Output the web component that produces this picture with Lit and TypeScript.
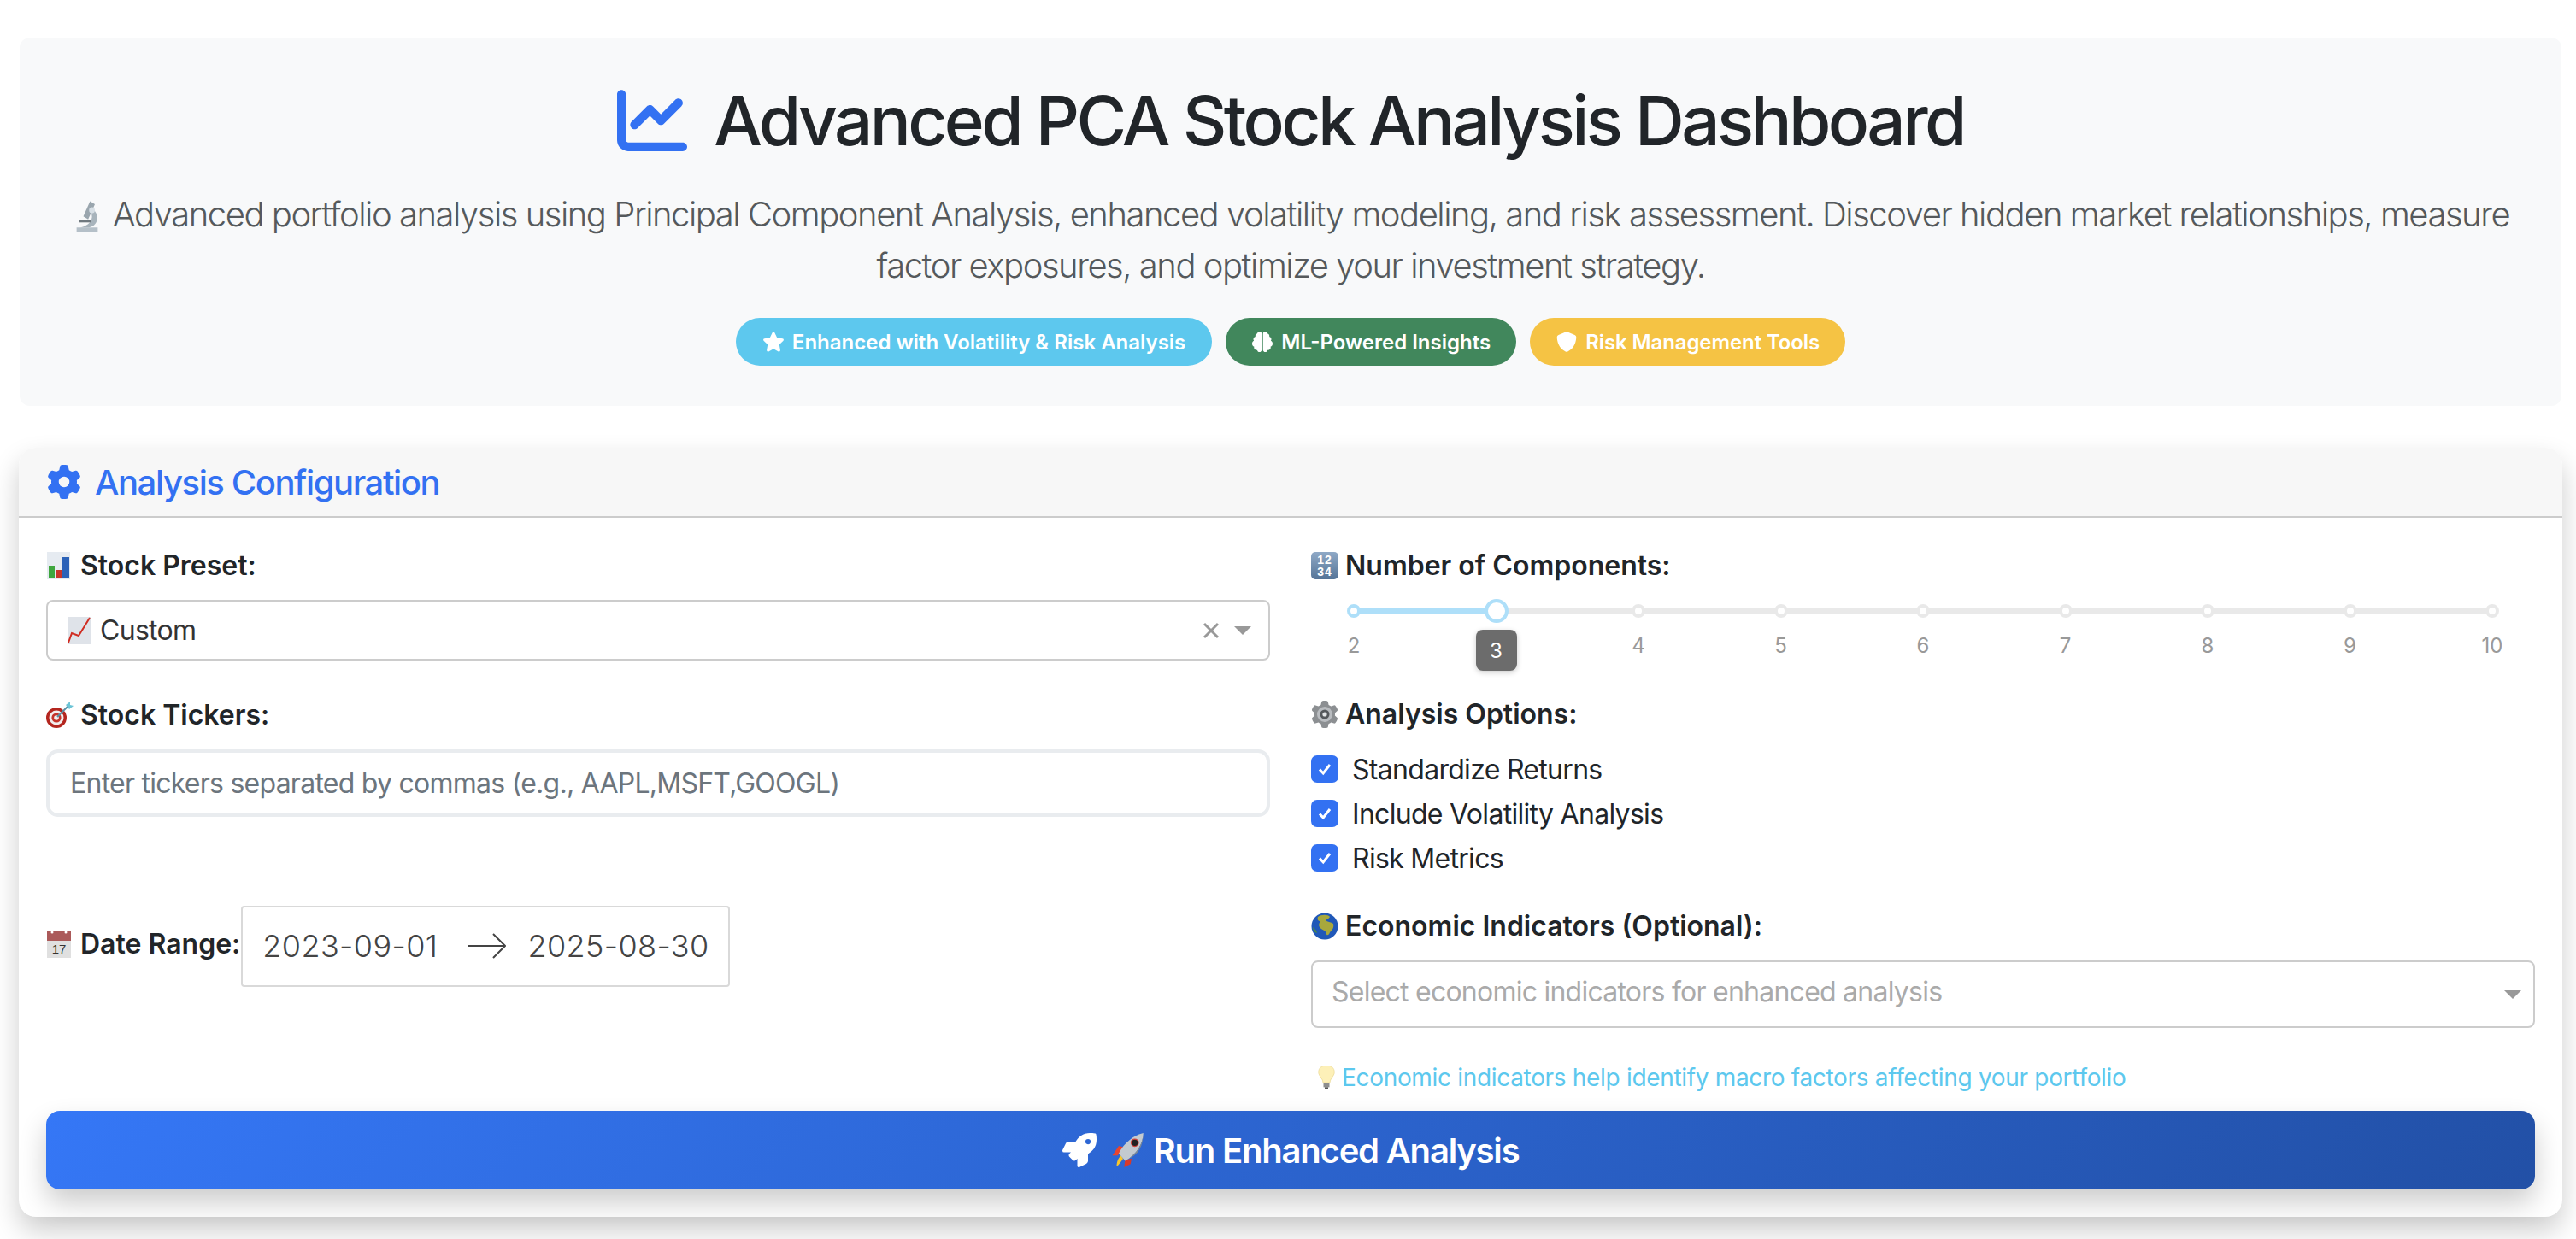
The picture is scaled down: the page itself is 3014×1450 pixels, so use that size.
import { LitElement, html, css, svg } from "lit";
import { customElement } from "lit/decorators.js";

const fa = (box: string, d: string, cls: string) =>
  html`<svg class=${cls} viewBox=${box} fill="currentColor"><path d=${d}></path></svg>`;

const P = {
  line: "M64 64c0-17.7-14.3-32-32-32S0 46.3 0 64V400c0 44.2 35.8 80 80 80H480c17.7 0 32-14.3 32-32s-14.3-32-32-32H80c-8.8 0-16-7.2-16-16V64zm406.6 86.6c12.5-12.5 12.5-32.8 0-45.3s-32.8-12.5-45.3 0L320 210.7l-57.4-57.4c-12.5-12.5-32.8-12.5-45.3 0l-112 112c-12.5 12.5-12.5 32.8 0 45.3s32.8 12.5 45.3 0L240 221.3l57.4 57.4c12.5 12.5 32.8 12.5 45.3 0l128-128z",
  gear: "M495.9 166.6c3.2 8.7 .5 18.4-6.4 24.6l-43.3 39.4c1.1 8.3 1.7 16.8 1.7 25.4s-.6 17.1-1.7 25.4l43.3 39.4c6.9 6.2 9.6 15.9 6.4 24.6c-4.4 11.9-9.7 23.3-15.8 34.3l-4.7 8.1c-6.6 11-14 21.4-22.1 31.2c-5.9 7.2-15.7 9.6-24.5 6.8l-55.7-17.7c-13.4 10.3-28.2 18.9-44 25.4l-12.5 57.1c-2 9.1-9 16.3-18.2 17.8c-13.8 2.3-28 3.5-42.5 3.5s-28.7-1.2-42.5-3.5c-9.2-1.5-16.2-8.7-18.2-17.8l-12.5-57.1c-15.8-6.5-30.6-15.1-44-25.4L83.1 425.9c-8.8 2.8-18.6 .3-24.5-6.8c-8.1-9.8-15.5-20.2-22.1-31.2l-4.7-8.1c-6.1-11-11.4-22.4-15.8-34.3c-3.2-8.7-.5-18.4 6.4-24.6l43.3-39.4C64.6 273.1 64 264.6 64 256s.6-17.1 1.7-25.4L22.4 191.2c-6.9-6.2-9.6-15.9-6.4-24.6c4.4-11.9 9.7-23.3 15.8-34.3l4.7-8.1c6.6-11 14-21.4 22.1-31.2c5.9-7.2 15.7-9.6 24.5-6.8l55.7 17.7c13.4-10.3 28.2-18.9 44-25.4l12.5-57.1c2-9.1 9-16.3 18.2-17.8C227.3 1.2 241.5 0 256 0s28.7 1.2 42.5 3.5c9.2 1.5 16.2 8.7 18.2 17.8l12.5 57.1c15.8 6.5 30.6 15.1 44 25.4l55.7-17.7c8.8-2.8 18.6-.3 24.5 6.8c8.1 9.8 15.5 20.2 22.1 31.2l4.7 8.1c6.1 11 11.4 22.4 15.8 34.3zM256 336a80 80 0 1 0 0-160 80 80 0 1 0 0 160z",
  star: "M316.9 18C311.6 7 300.4 0 288.1 0s-23.4 7-28.8 18L195 150.3 51.4 171.5c-12 1.8-22 10.2-25.7 21.7s-.7 24.2 7.9 32.7L137.8 329 113.2 474.7c-2 12 3 24.2 12.9 31.3s23 8 33.8 2.3l128.3-68.5 128.3 68.5c10.8 5.7 23.9 4.9 33.8-2.3s14.9-19.3 12.9-31.3L438.5 329 542.7 225.9c8.6-8.5 11.7-21.2 7.9-32.7s-13.7-19.9-25.7-21.7L381.2 150.3 316.9 18z",
  shield: "M256 0c4.6 0 9.2 1 13.4 2.9L457.7 82.8c22 9.3 38.4 31 38.3 57.2c-.5 99.2-41.3 280.7-213.6 363.2c-16.7 8-36.1 8-52.8 0C57.3 420.7 16.5 239.2 16 140c-.1-26.2 16.3-47.9 38.3-57.2L242.7 2.9C246.8 1 251.4 0 256 0z",
  brain: "M184 0c30.9 0 56 25.1 56 56V456c0 30.9-25.1 56-56 56c-28.9 0-52.7-21.9-55.7-50.1c-5.2 1.4-10.7 2.1-16.3 2.1c-35.3 0-64-28.7-64-64c0-7.4 1.3-14.6 3.6-21.2C21.4 367.4 0 338.2 0 304c0-31.9 18.7-59.5 45.8-72.3C37.1 220.8 32 207 32 192c0-30.7 21.6-56.3 50.4-62.6C80.8 123.9 80 118 80 112c0-29.9 20.6-55.1 48.3-62.1C131.3 21.9 155.1 0 184 0zM328 0c28.9 0 52.6 21.9 55.7 49.9c27.8 7 48.3 32.1 48.3 62.1c0 6-.8 11.9-2.4 17.4c28.8 6.2 50.4 31.9 50.4 62.6c0 15-5.1 28.8-13.8 39.7C493.3 244.5 512 272.1 512 304c0 34.2-21.4 63.4-51.6 74.8c2.3 6.6 3.6 13.8 3.6 21.2c0 35.3-28.7 64-64 64c-5.6 0-11.1-.7-16.3-2.1c-3 28.2-26.8 50.1-55.7 50.1c-30.9 0-56-25.1-56-56V56c0-30.9 25.1-56 56-56z",
  rocket: "M505.12019,19.09375c-1.18945-5.53125-6.65819-11-12.207-12.1875C460.716,0,435.507,0,410.40747,0,307.17523,0,245.26909,55.20312,199.05238,128H94.83772c-16.34763.01562-35.55658,11.875-42.88664,26.48438L2.51562,253.29688A28.4,28.4,0,0,0,0,264a24.00867,24.00867,0,0,0,24.00582,24H127.81618l-22.47457,22.46875c-11.36521,11.36133-12.99607,32.25781,0,45.25L156.24582,406.625c11.15623,11.1875,32.15619,13.15625,45.27726,0l22.47457-22.46875V488a24.00867,24.00867,0,0,0,24.00581,24,28.55934,28.55934,0,0,0,10.707-2.51562l98.72834-49.39063c14.62888-7.29687,26.50776-26.5,26.50776-42.85937V312.79688c72.59753-46.3125,128.03493-108.40626,128.03493-211.09376C512.07526,76.5,512.07526,51.29688,505.12019,19.09375ZM384.04033,168A40,40,0,1,1,424.05,128,40.02322,40.02322,0,0,1,384.04033,168Z",
};

const emoji = (body: unknown, cls = "emoji") =>
  html`<svg class=${cls} viewBox="0 0 32 32" preserveAspectRatio="none">${body}</svg>`;

const E = {
  bars: svg`<rect x="1" y="0" width="27" height="32" fill="#e6ebf1"/><rect x="3" y="16" width="7" height="15" fill="#3ea63e"/><rect x="11" y="21" width="7" height="10" fill="#c9352b"/><rect x="19" y="6" width="8" height="25" fill="#2b62b8"/>`,
  up: svg`<rect x="2" y="0" width="28" height="32" fill="#dfe3e9"/><path d="M3 30 L7 19 L15 22 L28 1" fill="none" stroke="#d02c22" stroke-width="2"/>`,
  target: svg`<circle cx="12" cy="19" r="12" fill="#b4261f"/><circle cx="12" cy="19" r="8.5" fill="#f3eeee"/><circle cx="12" cy="19" r="5.6" fill="#c5342b"/><circle cx="12" cy="19" r="2.8" fill="#f3eeee"/><path d="M13 18 L26 5" stroke="#5b8fa3" stroke-width="2"/><path d="M23 4 L28 0 L28 4 L32 5 L27 9 Z" fill="#6cc4d6"/>`,
  nums: svg`<defs><linearGradient id="ng" x1="0" y1="0" x2="0" y2="1"><stop offset="0" stop-color="#8fa9c6"/><stop offset="1" stop-color="#557497"/></linearGradient></defs><rect x="0" y="0" width="32" height="32" rx="5" fill="url(#ng)"/><text x="16" y="14" text-anchor="middle" class="e-t">12</text><text x="16" y="28" text-anchor="middle" class="e-t">34</text>`,
  cog: svg`<g transform="scale(.0625)"><path fill="#8c8f92" d=${P.gear}></path></g><circle cx="16" cy="16" r="9" fill="#b9bcc0"/><circle cx="16" cy="16" r="5.5" fill="#55585c"/><circle cx="16" cy="16" r="2.6" fill="#e2e4e6"/>`,
  cal: svg`<rect x="1" y="0" width="28" height="32" fill="#e0e0e0"/><rect x="1" y="0" width="28" height="12" fill="#ab5a5a"/><circle cx="7" cy="2" r="1.5" fill="#fff"/><circle cx="23" cy="2" r="1.5" fill="#fff"/><text x="15" y="27" text-anchor="middle" class="e-c">17</text>`,
  globe: svg`<circle cx="16" cy="16" r="15.5" fill="#2058b8"/><path d="M8 5 C12 2 20 2 22 5 C20 8 18 8 17 9 C19 11 23 11 26 13 C27 18 25 20 22 23 C21 27 18 27 18 25 C17 21 15 21 12 19 C9 17 8 14 11 10 C8 10 7 8 8 5 Z" fill="#a8a83c"/><path d="M2 17 C4 19 6 20 7 24 C4 23 2 20 2 17 Z" fill="#4f8f3c"/>`,
  bulb: svg`<path d="M16 0 C8 0 6 6 7 11 C8 15 12 18 12 23 L20 23 C20 18 24 15 25 11 C26 6 24 0 16 0 Z" fill="#fdf0b8" stroke="#e8d68c" stroke-width=".7"/><rect x="12.5" y="23" width="7" height="6" fill="#8d8d8d"/><rect x="14" y="29" width="4" height="3" fill="#555"/>`,
  rocket: svg`<path d="M2 21 L8 12 L12 13 L7 21 Z" fill="#e8442e"/><path d="M20 24 L19 29 L13 32 L14 25 Z" fill="#d8392a"/><path d="M6 31 C6 26 8 23 10 21 L12 24 C10 27 8 30 6 31 Z" fill="#f9c62b"/><path d="M8 19 C13 9 22 2 31 0 C31 9 25 20 14 26 Z" fill="#c3cad0"/><path d="M14 26 C25 20 31 9 31 0 C31 12 26 21 17 24 Z" fill="#7f8a93"/><circle cx="23" cy="9" r="3.4" fill="#222" stroke="#d0413a" stroke-width="1"/>`,
  micro: svg`<rect x="5" y="28" width="22" height="4" fill="#b5c0c8"/><path d="M19 2 L24 5 L17 20 L12 17 Z" fill="#9aa6ae"/><path d="M22 10 C29 15 28 26 18 28 L9 28 C15 27 24 22 20 13 Z" fill="#a8b4bc"/><circle cx="21" cy="11" r="3" fill="#d8e0e6"/><rect x="8" y="21" width="12" height="2" fill="#70797f"/>`,
};

const MARKS = [2, 3, 4, 5, 6, 7, 8, 9, 10];
const pos = (v: number) => `${((v - 2) / 8) * 100}%`;

@customElement("app-root")
export class AppRoot extends LitElement {
  static styles = css`
    :host { display: block; background: #fff; font-family: Inter, "Noto Sans", sans-serif; color: #212529; padding: 44px 16px 0 22px; height: 1450px; box-sizing: border-box; overflow: hidden; }
    * { box-sizing: border-box; }
    .hero { background: #f8f9fa; border-radius: 12px; height: 431px; margin: 0 1px 49px; padding-top: 49px; text-align: center; }
    h1 { margin: 0; display: flex; justify-content: center; align-items: center; gap: 31px; font-size: 80px; line-height: 96px; font-weight: 500; letter-spacing: -3.6px; }
    .h-ico { width: 82px; height: 82px; color: #3371f2; }
    .lead { margin: 32px 48px 0; font-size: 40px; line-height: 60px; font-weight: 300; color: #55595c; letter-spacing: -1.48px; }
    .m-ico { width: 36px; height: 38px; vertical-align: -6px; margin-right: 12px; }
    .badges { display: flex; justify-content: center; gap: 16px; margin-top: 31px; }
    .badge { height: 56px; border-radius: 28px; padding: 0 30px; display: flex; align-items: center; gap: 9px; color: #fff; font-size: 24px; font-weight: 600; }
    .b1 { background: #5dc8ee; padding: 0 31px; }
    .b2 { background: #41875c; }
    .b3 { background: #f5c344; letter-spacing: -.1px; }
    .b-ico { width: 26px; height: 24px; }
    .card { background: #fff; border-radius: 20px; box-shadow: 0 16px 32px rgba(0,0,0,.2); height: 900px; }
    .card-h { height: 82px; background: #f7f7f7; border-bottom: 2px solid #ccc; border-radius: 20px 20px 0 0; display: flex; align-items: center; padding-left: 33px; gap: 16px; color: #3371f2; font-size: 40px; font-weight: 500; letter-spacing: -1.4px; }
    .g-ico { width: 40px; height: 40px; }
    .card-b { padding: 32px; }
    .cols { display: grid; grid-template-columns: 1fr 1fr; gap: 48px; }
    .lbl { display: flex; align-items: center; font-size: 32px; line-height: 48px; font-weight: 600; margin-bottom: 16px; white-space: nowrap; }
    .emoji { width: 32px; height: 32px; margin-right: 8px; flex: none; }
    .e-t { font: 600 14px "Liberation Sans", sans-serif; fill: #fff; letter-spacing: 1px; }
    .e-c { font: 400 15px "Liberation Sans", sans-serif; fill: #333; }
    .sel { height: 71px; border: 2px solid #ccc; border-radius: 8px; display: flex; align-items: center; padding: 0 20px 0 21px; font-size: 32px; letter-spacing: -.7px; color: #333; margin-bottom: 40px; }
    .grow { flex: 1; }
    .x { width: 20px; height: 20px; margin-right: 17px; }
    .caret { width: 0; height: 0; border-left: 10px solid transparent; border-right: 10px solid transparent; border-top: 10px solid #999; }
    .input { height: 79px; border: 4px solid #e9ecef; border-radius: 14px; display: flex; align-items: center; padding: 0 24px; font-size: 32px; letter-spacing: -.75px; color: #6c757d; }
    .date-row { display: flex; align-items: center; margin-top: 104px; }
    .date-row .lbl { margin: 0 1px 6px 0; }
    .date { width: 572px; height: 95px; border: 2px solid #d9d9d9; border-radius: 4px; display: flex; align-items: center; padding: 0 23px 2px; font-size: 36px; font-weight: 300; letter-spacing: .4px; color: #444; white-space: nowrap; }
    .arr { width: 44px; height: 30px; margin: 0 25px 0 36px; flex: none; }
    .slider { position: relative; height: 70px; margin: 0 50px 40px 50px; }
    .rail { position: absolute; left: 0; right: 0; top: 9px; height: 8px; background: #e9e9e9; border-radius: 4px; }
    .track { position: absolute; left: 0; top: 9px; height: 8px; background: #aedff9; border-radius: 4px; }
    .dot { position: absolute; top: 5px; width: 16px; height: 16px; margin-left: -8px; background: #fff; border: 4px solid #e9e9e9; border-radius: 50%; }
    .dot.on { border-color: #aedff9; }
    .handle { position: absolute; top: -1px; width: 28px; height: 28px; margin-left: -14px; background: #fff; border: 4px solid #aedff9; border-radius: 50%; }
    .tick { position: absolute; top: 39px; width: 60px; margin-left: -30px; text-align: center; font-size: 24px; line-height: 30px; color: #999; }
    .tip { position: absolute; top: 35px; width: 48px; height: 48px; margin-left: -24px; background: #6c6c6c; border-radius: 8px; color: #fff; font-size: 24px; display: flex; align-items: center; justify-content: center; box-shadow: 0 2px 6px rgba(0,0,0,.2); }
    .chk { height: 52px; display: flex; align-items: center; font-size: 32px; letter-spacing: -.7px; }
    .box { width: 32px; height: 32px; border-radius: 7px; background: #3371f2; margin-right: 16px; display: flex; align-items: center; justify-content: center; }
    .box svg { width: 20px; height: 20px; }
    .checks { margin: -2px 0 30px; }
    .sel2 { height: 79px; border: 2px solid #ccc; border-radius: 8px; display: flex; align-items: center; justify-content: space-between; padding: 0 14px 0 22px; font-size: 32px; letter-spacing: -.76px; color: #aaa; margin-bottom: 37px; }
    .sel2 > span:first-child { padding-bottom: 6px; }
    .hint { display: flex; align-items: center; font-size: 28px; line-height: 42px; letter-spacing: -.32px; color: #5dc8ee; margin-bottom: 18px; padding-left: 2px; }
    .hint .emoji { height: 28px; margin-right: 2px; }
    .run { height: 92px; border-radius: 16px; background: linear-gradient(135deg, #3577f6, #2250a6); box-shadow: 0 16px 32px rgba(0,0,0,.2); color: #fff; font-size: 40px; font-weight: 600; letter-spacing: -1.2px; display: flex; align-items: center; justify-content: center; gap: 16px; }
    .r-ico { width: 40px; height: 40px; }
    .r-emo { width: 40px; height: 40px; margin-right: -5px; }
  `;

  render() {
    return html`
      <header class="hero">
        <h1>${fa("0 0 512 512", P.line, "h-ico")}<span>Advanced PCA Stock Analysis Dashboard</span></h1>
        <p class="lead"><svg class="m-ico" viewBox="0 0 32 32" preserveAspectRatio="none">${E.micro}</svg>Advanced portfolio analysis using Principal Component Analysis, enhanced volatility modeling, and risk assessment. Discover hidden market relationships, measure factor exposures, and optimize your investment strategy.</p>
        <div class="badges">
          <span class="badge b1">${fa("0 0 576 512", P.star, "b-ico")}Enhanced with Volatility &amp; Risk Analysis</span>
          <span class="badge b2">${fa("0 0 512 512", P.brain, "b-ico")}ML-Powered Insights</span>
          <span class="badge b3">${fa("0 0 512 512", P.shield, "b-ico")}Risk Management Tools</span>
        </div>
      </header>
      <section class="card">
        <div class="card-h">${fa("0 0 512 512", P.gear, "g-ico")}<span>Analysis Configuration</span></div>
        <div class="card-b">
          <div class="cols">
            <div>
              <div class="lbl">${emoji(E.bars)}<span>Stock Preset:</span></div>
              <div class="sel">${emoji(E.up)}<span>Custom</span><span class="grow"></span>
                <svg class="x" viewBox="0 0 20 20"><path d="M2 2 L18 18 M18 2 L2 18" stroke="#999" stroke-width="3"></path></svg><span class="caret"></span></div>
              <div class="lbl">${emoji(E.target)}<span>Stock Tickers:</span></div>
              <div class="input">Enter tickers separated by commas (e.g., AAPL,MSFT,GOOGL)</div>
              <div class="date-row">
                <div class="lbl">${emoji(E.cal)}<span>Date Range:</span></div>
                <div class="date"><span>2023-09-01</span>
                  <svg class="arr" viewBox="0 0 44 30"><path d="M0 15 H43 M29 1 L43 15 L29 29" fill="none" stroke="#444" stroke-width="2"></path></svg>
                  <span>2025-08-30</span></div>
              </div>
            </div>
            <div>
              <div class="lbl">${emoji(E.nums)}<span>Number of Components:</span></div>
              <div class="slider">
                <div class="rail"></div>
                <div class="track" style="width:${pos(3)}"></div>
                ${MARKS.map((m) => html`<span class="dot ${m <= 3 ? "on" : ""}" style="left:${pos(m)}"></span>`)}
                ${MARKS.filter((m) => m !== 3).map((m) => html`<span class="tick" style="left:${pos(m)}">${m}</span>`)}
                <span class="handle" style="left:${pos(3)}"></span>
                <span class="tip" style="left:${pos(3)}">3</span>
              </div>
              <div class="lbl">${emoji(E.cog)}<span>Analysis Options:</span></div>
              <div class="checks">
                ${["Standardize Returns", "Include Volatility Analysis", "Risk Metrics"].map(
                  (t) => html`<div class="chk"><span class="box"><svg viewBox="0 0 20 20"><path d="M4 10.5 L8.2 15 L16 5" fill="none" stroke="#fff" stroke-width="3"></path></svg></span>${t}</div>`
                )}
              </div>
              <div class="lbl">${emoji(E.globe)}<span>Economic Indicators (Optional):</span></div>
              <div class="sel2"><span>Select economic indicators for enhanced analysis</span><span class="caret"></span></div>
              <div class="hint">${emoji(E.bulb)}<span>Economic indicators help identify macro factors affecting your portfolio</span></div>
            </div>
          </div>
          <div class="run">${fa("0 0 512 512", P.rocket, "r-ico")}<svg class="r-emo" viewBox="0 0 32 32">${E.rocket}</svg><span>Run Enhanced Analysis</span></div>
        </div>
      </section>
    `;
  }
}
